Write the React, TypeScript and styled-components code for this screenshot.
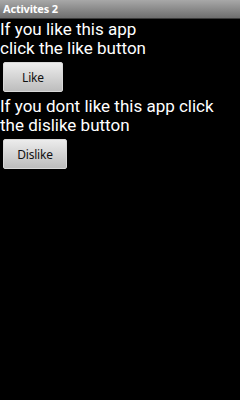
import React from "react";
import styled, { createGlobalStyle } from "styled-components";

const GlobalStyle = createGlobalStyle`
  html, body {
    margin: 0;
    padding: 0;
    background: #000;
  }
  body {
    font-family: Roboto, "Noto Sans", sans-serif;
  }
`;

export default function App() {
  return (
    <>
      <GlobalStyle />
      <StScreen>
        <StTitleBar>Activites 2</StTitleBar>
        <StContent>
          <StMessage>
            If you like this app
            <br />
            click the like button
          </StMessage>
          <StButton $width={60}>Like</StButton>
          <StMessage>
            If you dont like this app click
            <br />
            the dislike button
          </StMessage>
          <StButton $width={64}>Dislike</StButton>
        </StContent>
      </StScreen>
    </>
  );
}

const StScreen = styled.div`
  width: 240px;
  height: 400px;
  background: #000;
  display: flex;
  flex-direction: column;
`;

const StTitleBar = styled.div`
  height: 18px;
  line-height: 18px;
  padding-left: 3px;
  border-bottom: 1px solid #3a3a3a;
  background: linear-gradient(#a8a8a8, #6e6e6e);
  color: #fff;
  font-family: "Noto Sans", "DejaVu Sans", sans-serif;
  font-weight: bold;
  font-size: 11px;
  letter-spacing: -0.2px;
`;

const StContent = styled.div`
  display: flex;
  flex-direction: column;
  align-items: flex-start;
`;

const StMessage = styled.p`
  margin: 1px 0 0;
  white-space: nowrap;
  color: #fff;
  font-family: Roboto, "Noto Sans", sans-serif;
  font-size: 17px;
  line-height: 19px;
`;

const StButton = styled.button<{ $width: number }>`
  width: ${(p) => p.$width}px;
  height: 30px;
  margin: 4px 3px 4px;
  padding: 0;
  border: 1px solid #d8d8d8;
  border-radius: 2px;
  background: linear-gradient(#ececec, #bdbdbd);
  color: #111;
  font-family: "Noto Sans", "DejaVu Sans", sans-serif;
  font-size: 12px;
  letter-spacing: -0.2px;
`;
